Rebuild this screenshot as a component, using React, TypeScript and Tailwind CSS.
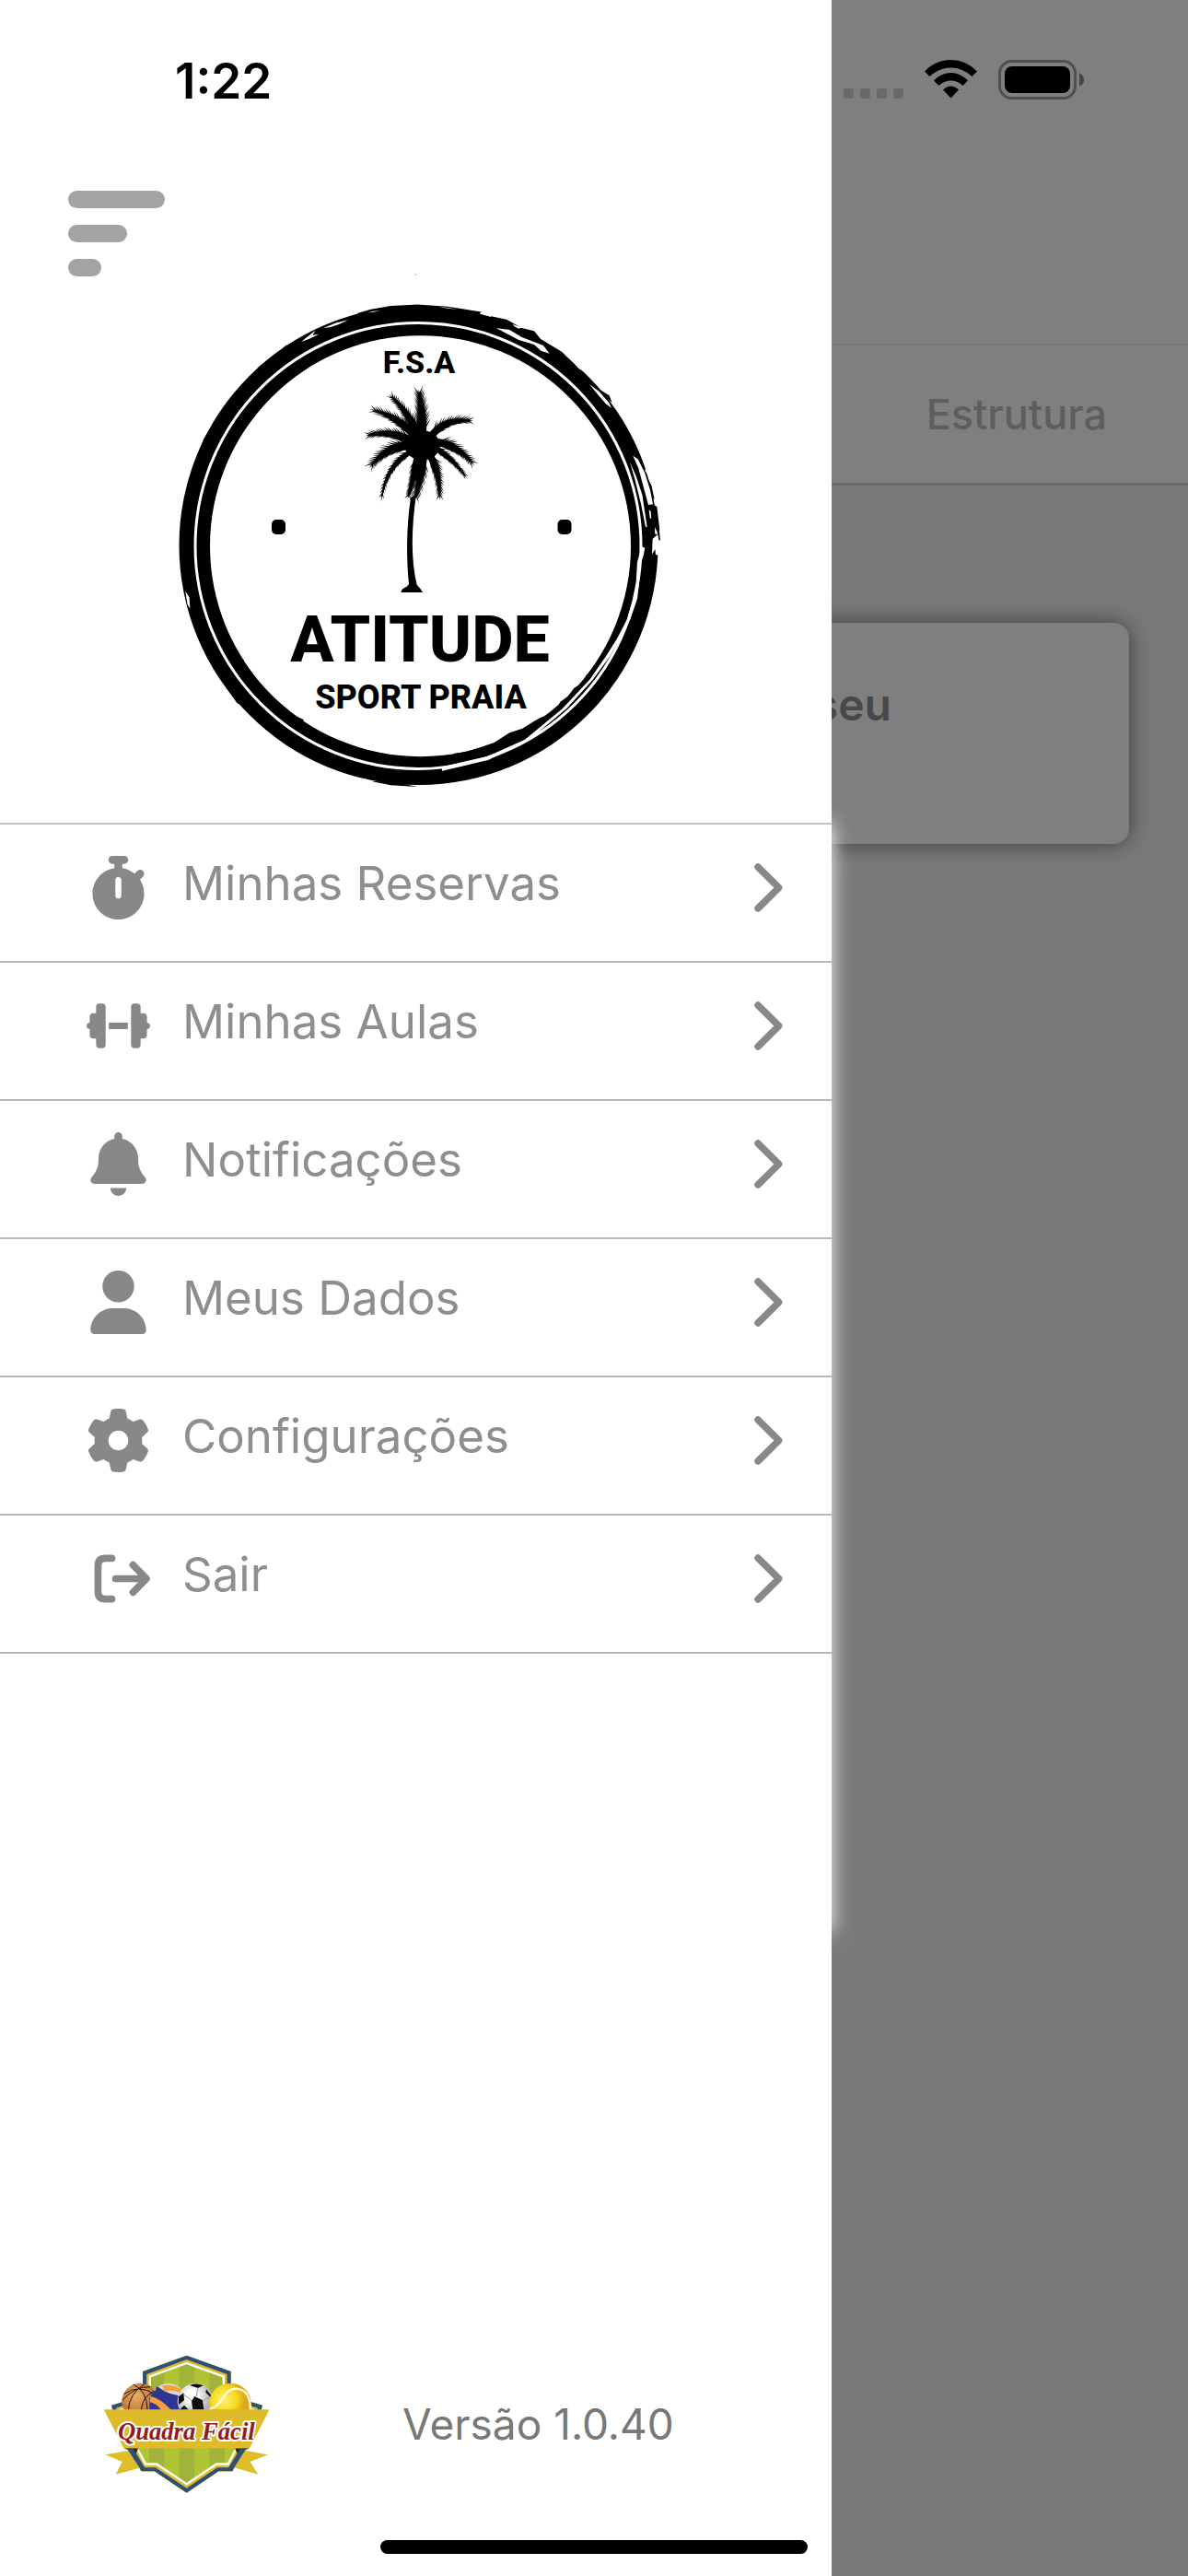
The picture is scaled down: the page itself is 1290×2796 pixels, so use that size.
import React from 'react'
import { FaBell, FaDumbbell, FaGear, FaStopwatch, FaUser } from 'react-icons/fa6'

const LogoutIcon = ({ className }: { className?: string }) => (
  <svg viewBox="0 0 512 512" className={className} fill="none" stroke="currentColor" strokeWidth="57" strokeLinecap="round" strokeLinejoin="round">
    <path d="M204 92h-52q-60 0-60 60v208q0 60 60 60h52" />
    <path d="M234 256h246M374 146l108 110-108 110" />
  </svg>
)

const ChevronIcon = () => (
  <svg viewBox="0 0 31 53" className="h-[53px] w-[31px]" fill="none" stroke="currentColor" strokeWidth="7.4" strokeLinecap="round" strokeLinejoin="round">
    <path d="M4 4l22.700 22.500L4 49" />
  </svg>
)

const menu = [
  { label: 'Minhas Reservas', Icon: FaStopwatch },
  { label: 'Minhas Aulas', Icon: FaDumbbell },
  { label: 'Notificações', Icon: FaBell },
  { label: 'Meus Dados', Icon: FaUser },
  { label: 'Configurações', Icon: FaGear },
  { label: 'Sair', Icon: LogoutIcon },
]

// base x/y, control x/y, tip x/y, leaf length
const fronds = [
  [262, 350, 268, 260, 254, 188, 60],
  [255, 345, 225, 265, 157, 203, 46],
  [245, 345, 190, 275, 95, 252, 48],
  [240, 360, 160, 315, 80, 340, 46],
  [245, 370, 150, 365, 92, 445, 58],
  [240, 385, 145, 430, 131, 555, 32],
  [250, 400, 240, 470, 218, 545, 40],
  [268, 400, 262, 470, 242, 548, 52],
  [285, 395, 325, 450, 322, 550, 44],
  [300, 375, 360, 405, 413, 480, 32],
  [300, 360, 375, 360, 437, 437, 50],
  [290, 345, 345, 275, 433, 291, 46],
]

// solid middle of the leaf, widest at the crown
const frondBody = ([x0, y0, cx, cy, x1, y1, len]: number[]) => {
  const b = Math.atan2(y1 - y0, x1 - x0)
  const px = -Math.sin(b) * len * 0.28
  const py = Math.cos(b) * len * 0.28
  return `M${x0 + px} ${y0 + py}Q${cx + px} ${cy + py} ${x1} ${y1}Q${cx - px} ${cy - py} ${x0 - px} ${y0 - py}Z`
}

const frondLeaflets = ([x0, y0, cx, cy, x1, y1, len]: number[]) => {
  const n = 15
  let d = ''
  for (let i = 0; i < n; i++) {
    const t = 0.1 + (i / n) * 0.84
    const u = 1 - t
    const x = u * u * x0 + 2 * u * t * cx + t * t * x1
    const y = u * u * y0 + 2 * u * t * cy + t * t * y1
    const a = Math.atan2(u * (cy - y0) + t * (y1 - cy), u * (cx - x0) + t * (x1 - cx))
    const l = len * (1.05 - 0.55 * t) * (i % 3 === 1 ? 0.82 : 1)
    const w = 10 - 5 * t
    for (const s of [-0.5, 0.5]) {
      const tip = `${x + l * Math.cos(a + s)} ${y + l * Math.sin(a + s)}`
      const p = `${x - w * Math.cos(a)} ${y - w * Math.sin(a)}`
      const q = `${x + w * Math.cos(a)} ${y + w * Math.sin(a)}`
      d += s < 0 ? `M${p}L${tip}L${q}Z` : `M${q}L${tip}L${p}Z`
    }
  }
  return d
}

const AtitudeLogo = () => (
  <svg viewBox="172 316 560 560" className="h-[560px] w-[560px] overflow-visible" role="img" aria-label="Atitude Sport Praia">
    <circle cx="454.500" cy="592" r="260" />
    <circle cx="456.500" cy="592.700" r="228.500" fill="#fff" />
    <ellipse cx="451.500" cy="298" rx="1.500" ry="0.500" fill="#aaa" />
    {/* brush wear on the ring */}
    <g transform="translate(170 280) scale(.3635 .3827)">
      <path d="M600 157L640 146 700 136 780 132 870 138 970 153 960 165 600 170ZM128 555L140 515 205 415 175 520ZM300 310L330 295 390 245 360 290ZM155 1130L195 1200 240 1262 300 1290ZM640 1484L700 1495 780 1500 700 1485Z" />
      <path d="M545 1368L620 1395 710 1412 700 1430 560 1395ZM350 1252L390 1280 395 1290 440 1310 430 1330 360 1285ZM222 1092L235 1130 260 1140 262 1150 290 1188 270 1190ZM158 900L172 945 176 968 166 960ZM156 760L162 720 175 670 184 640 165 700Z" />
      <path fill="#fff" d="M498 199L535 184 572 176 545 188 520 196ZM432 238L455 220 475 205 466 219 485 216 455 230ZM86 945L98 962 100 995 92 982ZM630 155L650 151 668 149 645 154ZM840 137L870 143 900 146 875 142ZM620 1476L650 1487 640 1486Z" />
    </g>
    <path transform="translate(480 560) scale(.3333)" d="M612 0L618 100 614 190 602 250 603 285 585 328 572 368 555 402 535 430 505 482 470 518 465 540 430 560 410 588 385 605 375 626 345 650 325 655 300 668 262 692 220 706 170 738 120 755 80 768 40 773 30 785 0 780 0 805 180 778 330 695 480 560 590 400 635 200 630 0Z" />
    <circle cx="454" cy="592.500" r="242" fill="none" stroke="#fff" strokeWidth="3" />
    <path transform="translate(480 560) scale(.3333)" fill="#fff" d="M650 100L661 104 656 130 646 160 642 220 636 270 612 340 580 400 545 460 490 535 405 628 280 732 150 795 0 830 0 817 150 782 270 728 392 628 482 532 535 455 570 400 602 338 620 275 632 215 636 150Z" />
    <g transform="translate(500 320) scale(.3333)">
      <path d="M100 70L150 80 200 108 240 118 262 145 330 185 420 275 400 270 90 90ZM415 285L485 328 494 352 480 340 498 375 480 370ZM570 520L600 560 595 563 580 545ZM602 585L622 620 632 665 628 662 615 625ZM625 680L640 690 649 765 645 775 636 730Z" />
      <path fill="#fff" d="M116 108L160 114 200 138 245 155 270 165 290 191 262 182 240 162 190 147ZM170 96L200 106 190 110 175 103ZM358 210L385 228 412 256 385 240ZM420 291L452 315 484 352 492 368 475 356 452 330ZM562 524L578 535 600 578 618 635 627 682 612 684 596 625 580 565ZM601 572L618 600 630 640 655 700 670 700 640 560 610 530 600 540 604 562ZM552 545L572 590 592 650 608 755 603 756 588 680 568 600ZM614 700L620 705 622 730 617 726ZM632 735L642 760 642 779 634 779Z" />
    </g>
    <path transform="translate(480 560) scale(.3333)" fill="#fff" d="M686 75L702 60 712 85 712 130 696 126 694 108 684 125Z" />
    <path transform="translate(480 560) scale(.3333)" d="M692 10L708 50 711 80 706 78 702 55 690 30Z" />
    <rect x="295" y="564" width="15" height="16" rx="5" />
    <rect x="605.500" y="564" width="15" height="16" rx="5" />
    {/* palm tree */}
    <g transform="translate(370 360) scale(.3333)">
      <ellipse cx="266" cy="370" rx="58" ry="48" />
      {fronds.map((f, i) => (
        <g key={i}>
          <path d={frondBody(f)} />
          <path d={frondLeaflets(f)} />
        </g>
      ))}
      <path d="M228 540C213 640 214 740 222 822L215 830Q198 836 196 849H267Q262 838 248 824C228 740 230 640 246 530Z" />
    </g>
    <g textAnchor="middle" fontWeight="800" fontFamily="Roboto, sans-serif">
      <text x="455" y="405" fontSize="34">F.S.A</text>
      <text x="456" y="718" fontSize="70">ATITUDE</text>
      <text x="457" y="769" fontSize="36">SPORT PRAIA</text>
    </g>
  </svg>
)

const shield = 'M308 50L452 102V182L555 212Q535 300 490 365L457 427H412L308 497 203 427H160L127 365Q82 300 63 212L165 182V102Z'

const QuadraFacilLogo = () => (
  <svg viewBox="36 48 546 450" className="h-[150px] w-[182px]" role="img" aria-label="Quadra Fácil">
    <defs>
      <clipPath id="shield"><path d={shield} /></clipPath>
      <clipPath id="balls"><rect x="30" y="120" width="560" height="107" /></clipPath>
      <radialGradient id="basket" cx=".4" cy=".35"><stop offset="0" stopColor="#e9ad62" /><stop offset="1" stopColor="#bf7231" /></radialGradient>
      <radialGradient id="soccer" cx=".4" cy=".35"><stop offset=".3" stopColor="#fff" /><stop offset="1" stopColor="#b5b5b5" /></radialGradient>
      <radialGradient id="tennis" cx=".35" cy=".4"><stop offset="0" stopColor="#fdf27a" /><stop offset=".6" stopColor="#f5dc1e" /><stop offset="1" stopColor="#dca818" /></radialGradient>
    </defs>
    <g clipPath="url(#shield)">
      <rect x="36" y="48" width="546" height="452" fill="#afc333" />
      <path fill="#a2b33b" d="M186 48h49v452h-49zM284 48h49v452h-49zM382 48h49v452h-49z" />
      <path d={shield} fill="none" stroke="#fff" strokeWidth="54" />
      <path d={shield} fill="none" stroke="#ddbb2b" strokeWidth="40" />
      <path d={shield} fill="none" stroke="#2f4f73" strokeWidth="25" />
    </g>
    <g clipPath="url(#balls)">
      <circle cx="157" cy="200" r="60" fill="url(#basket)" />
      <path d="M104 176Q150 140 208 178M118 228Q120 175 172 142M134 144Q180 165 180 228M98 196Q140 150 190 152M160 228Q165 180 202 168" fill="none" stroke="#1d1310" strokeWidth="3" />
      <circle cx="248" cy="200" r="59" fill="#d9dadb" />
      <path d="M198 164Q222 162 262 232H187V190Z" fill="#2b3790" />
      <path d="M212 150Q250 182 306 182L290 232H262Q232 190 205 164Z" fill="#2b3790" />
      <path d="M190 182Q225 190 262 232H228Q212 205 188 202ZM228 148Q262 140 300 165L290 172Q262 160 235 166Z" fill="#f99f38" />
      <circle cx="337" cy="199" r="59" fill="url(#soccer)" />
      <path d="M334 183L360 196 364 227H328L324 198ZM318 147Q340 138 362 148L345 156ZM282 184L298 172 300 196 282 210ZM372 160L392 186 384 184 370 170ZM300 212L316 228H284Z" fill="#0d0d0d" />
      <path d="M345 155L340 183M300 178L325 198M360 198L386 184" fill="none" stroke="#999" strokeWidth="3" />
      <ellipse cx="450" cy="206" rx="68" ry="66" fill="url(#tennis)" />
      <path d="M384 224C425 218 425 158 470 158Q516 162 516 228" fill="none" stroke="#fffbe0" strokeWidth="7" />
    </g>
    <path d="M103 352h48l-8 16zM513 352h-48l8 16z" fill="#2a230e" />
    <path d="M43 373L128 358 160 415 77 437 98 396ZM573 373L490 358 462 415 541 437 515 396Z" fill="#dfbd2b" />
    <path d="M113 352h20l44 72h-17zM503 352h-20l-44 72h18z" fill="#2f4f73" />
    <path d="M38 226H578L513 352H103Z" fill="#ddbb2b" />
    <text x="307" y="323" textAnchor="middle" fontSize="80" fontWeight="700" fontStyle="italic" fontFamily="'Liberation Serif', serif" fill="#931a1d" stroke="#fff" strokeWidth="12" strokeLinejoin="round" paintOrder="stroke">Quadra Fácil</text>
  </svg>
)

const StatusIcons = () => (
  <div className="flex h-[43px] items-end" aria-hidden="true">
    <div className="flex gap-[7px] pb-px">
      {[0, 1, 2, 3].map((i) => (
        <span key={i} className="size-[11px] rounded-[3px] bg-[#d2d2d2]" />
      ))}
    </div>
    <svg viewBox="0 0 57 42" className="mb-px ml-[23px] h-[42px] w-[57px]">
      <path d="M0 12.500Q12 0 28.500 0T57 12.500L51.500 18Q41 8.500 28.500 8.500T5.500 18Z" />
      <path d="M10 22.500Q18 14 28.500 14T47 22.500L41.500 28Q36 22.500 28.500 22.500T15.500 28Z" />
      <path d="M20 32.500Q24 28.500 28.500 28.500T37 32.500L28.500 41.500Z" />
    </svg>
    <svg viewBox="0 0 93 43" className="ml-[23px] h-[43px] w-[93px]">
      <rect x="1.500" y="1.500" width="82" height="40" rx="13" fill="none" stroke="#9e9e9e" strokeWidth="3" />
      <rect x="7" y="7" width="71" height="29" rx="8" />
      <path d="M88 14.500q5 2 5 7t-5 7z" fill="#8a8a8a" />
    </svg>
  </div>
)

const App = () => {
  return (
    <div className="grid min-h-screen grid-cols-1 overflow-hidden font-['Inter',sans-serif]">
      {/* page under the drawer */}
      <main className="col-start-1 row-start-1 flex flex-col bg-[#f2f4f8]">
        <header className="border-b-[3px] border-[#d4d6d9] bg-white">
          <div className="flex h-[373px] items-start justify-end pt-[65px] pr-[113px]">
            <StatusIcons />
          </div>
          <nav className="flex h-[151px] items-center justify-end border-t-2 border-[#efefef] pr-[88px]">
            <a href="#estrutura" className="text-[45px] font-medium text-[#bcbcbc]">Estrutura</a>
          </nav>
        </header>
        <section className="mx-16 mt-[149px] h-[240px] rounded-[17px] bg-white pt-[60px] pr-[258px] text-right shadow-[0_0_26px_rgba(0,0,0,0.5)]">
          <p className="text-[48px]/[58px] font-semibold text-[#909090]">seu</p>
        </section>
      </main>

      <div className="z-10 col-start-1 row-start-1 bg-black/50" />

      <aside className="z-20 col-start-1 row-start-1 flex w-[70%] flex-col bg-white">
        <div className="flex flex-col pt-[58px] pb-[17px]">
          <time className="pl-[190px] text-[53px]/[60px] font-semibold text-black">1:22</time>
          <button type="button" aria-label="Fechar menu" className="mt-[89px] ml-[74px] flex w-[105px] flex-col gap-[18px]">
            <span className="h-[19px] w-full rounded-full bg-[#a3a3a3]" />
            <span className="h-[19px] w-16 rounded-full bg-[#a3a3a3]" />
            <span className="h-[19px] w-9 rounded-full bg-[#a3a3a3]" />
          </button>
          <div className="mt-4 flex justify-center">
            <AtitudeLogo />
          </div>
        </div>

        <nav className="flex-1 border-t-2 border-[#c4c4c4] bg-white shadow-[0_0_20px_#fff]">
          <ul>
            {menu.map(({ label, Icon }) => (
              <li key={label} className="border-b-2 border-[#b9b9b9]">
                <a href="#" className="flex h-[148px] items-center pr-[53px] pb-3 pl-[94px] text-[#888]">
                  <Icon className="h-[69px] w-[69px]" />
                  <span className="flex-1 pb-2 pl-[35px] text-[51px] text-[#8e8e8e]">{label}</span>
                  <ChevronIcon />
                </a>
              </li>
            ))}
          </ul>
        </nav>

        <footer className="flex items-center gap-[143px] pt-[460px] pb-[90px] pl-28">
          <QuadraFacilLogo />
          <p className="text-[46px] text-[#787878]">Versão 1.0.40</p>
        </footer>
      </aside>

      <div className="z-30 col-start-1 row-start-1 mb-6 h-[15px] w-[36%] self-end justify-self-center rounded-full bg-black" />
    </div>
  )
}

export default App
